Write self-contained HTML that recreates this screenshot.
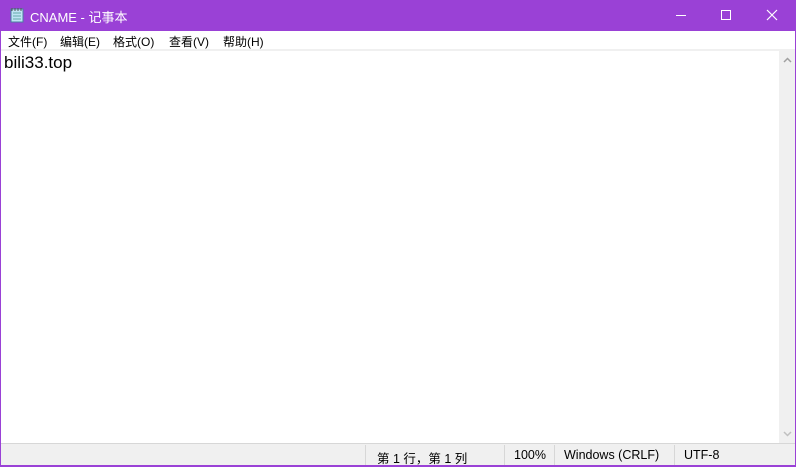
<!DOCTYPE html><html><head><meta charset="utf-8"><style>
*{margin:0;padding:0;box-sizing:border-box}
body{width:796px;height:466px;overflow:hidden;background:#9a41d6;font-family:"Liberation Sans","Noto Sans CJK SC",sans-serif;position:relative}
.title{position:absolute;left:0;top:0;width:796px;height:31px;background:#9a41d6;color:#fff;font-size:13px}
.menu{position:absolute;left:1px;top:31px;width:794px;height:19px;background:#fff;font-size:12px;color:#000}
.menu span{position:absolute;top:2px}
.sep{position:absolute;left:1px;top:49px;width:794px;height:2px;background:#f0f0f0}
.edit{position:absolute;left:1px;top:51px;width:778px;height:392px;background:#fff;font-size:17px;padding:2px 3px}
.sb{position:absolute;left:779px;top:51px;width:16px;height:392px;background:#f0f0f0}
.status{position:absolute;left:1px;top:443px;width:794px;height:22px;background:#f0f0f0;border-top:1px solid #d7d7d7;font-size:12.5px;color:#000}
.status span{position:absolute;top:4px}
.status i{position:absolute;top:1px;width:1px;height:20px;background:#d7d7d7}
</style></head><body>
<div class="title">
<svg style="position:absolute;left:10px;top:7px" width="14" height="16"><rect x="1" y="2" width="12" height="13" fill="#bfe4f4" stroke="#4a7fa0"/><path d="M3 6h8M3 9h8M3 12h8" stroke="#6aa" /><path d="M2 1v3M5 1v3M8 1v3M11 1v3" stroke="#555"/></svg>
<span style="position:absolute;left:30px;top:7px">CNAME - 记事本</span>
<div style="position:absolute;left:676px;top:15px;width:10px;height:1px;background:#fff"></div>
<div style="position:absolute;left:721px;top:10px;width:10px;height:10px;border:1px solid #fff"></div>
<svg style="position:absolute;left:766px;top:9px" width="12" height="12"><path d="M1 1L11 11M11 1L1 11" stroke="#fff" stroke-width="1.2"/></svg>
</div>
<div class="menu"><span style="left:7px">文件(F)</span><span style="left:59px">编辑(E)</span><span style="left:112px">格式(O)</span><span style="left:168px">查看(V)</span><span style="left:222px">帮助(H)</span></div>
<div class="sep"></div>
<div class="edit">bili33.top</div>
<div class="sb"><svg style="position:absolute;left:4px;top:6px" width="9" height="6"><path d="M1 5L4.5 1.5L8 5" stroke="#a0a0a0" fill="none" stroke-width="1.5"/></svg><svg style="position:absolute;left:4px;top:380px" width="9" height="6"><path d="M1 1L4.5 4.5L8 1" stroke="#c0c0c0" fill="none" stroke-width="1.5"/></svg></div>
<div class="status"><i style="left:364px"></i><span style="left:376px">第 1 行，第 1 列</span><i style="left:503px"></i><span style="left:513px">100%</span><i style="left:553px"></i><span style="left:563px">Windows (CRLF)</span><i style="left:673px"></i><span style="left:683px">UTF-8</span></div>
</body></html>
